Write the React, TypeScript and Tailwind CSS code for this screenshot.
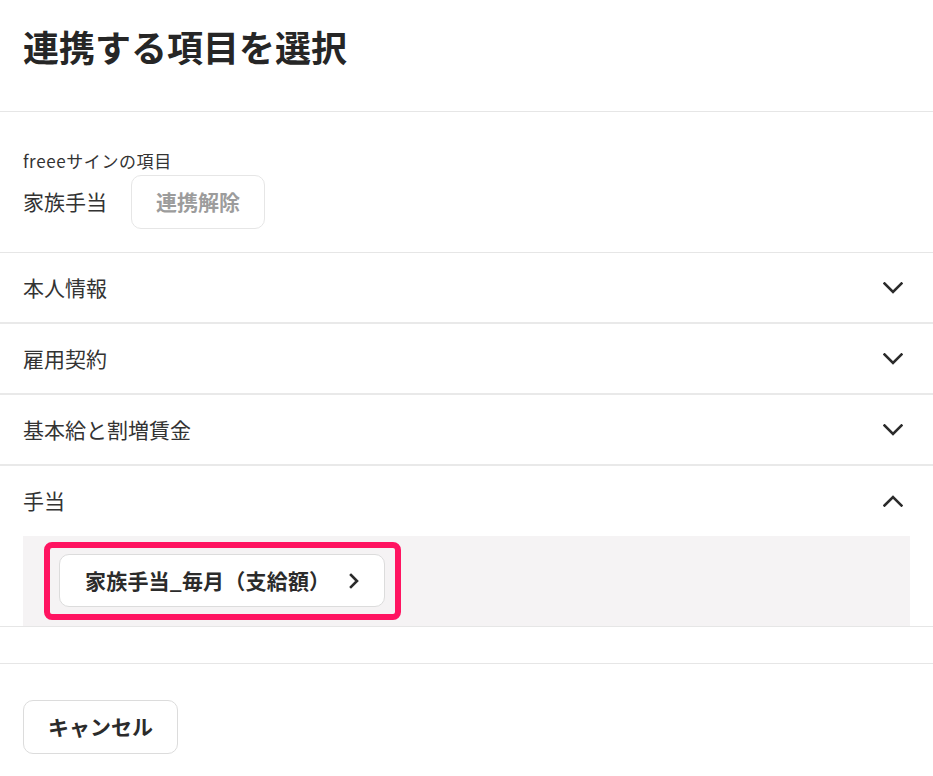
import React from "react";

const Down = () => (
  <svg width="20" height="12" viewBox="0 0 20 12" fill="none">
    <path d="M1.5 1.5 L10 10 L18.5 1.5" stroke="#2b2b2b" strokeWidth="2.6" strokeLinecap="square" />
  </svg>
);
const Up = () => (
  <svg width="20" height="12" viewBox="0 0 20 12" fill="none">
    <path d="M1.5 10.5 L10 2 L18.5 10.5" stroke="#2b2b2b" strokeWidth="2.6" strokeLinecap="square" />
  </svg>
);
const Right = () => (
  <svg width="10" height="16" viewBox="0 0 10 16" fill="none">
    <path d="M2 2 L8 8 L2 14" stroke="#2b2b2b" strokeWidth="2.6" strokeLinecap="square" />
  </svg>
);

const Row = ({ label }: { label: string }) => (
  <div className="flex h-[71px] items-center justify-between border-b-2 border-[#e9e9e9] pl-[23px] pr-[30px]">
    <span className="text-[21px] text-[#333]">{label}</span>
    <Down />
  </div>
);

export default function App() {
  return (
    <div
      className="w-[933px] h-[776px] bg-white overflow-hidden text-[#333]"
      style={{ fontFamily: '"Noto Sans CJK JP", "Noto Sans", sans-serif' }}
    >
      <div className="h-[112px] border-b border-[#e6e6e6] pl-[23px] pt-[22px]">
        <h1 className="text-[36px] font-bold leading-[48px] text-[#262626]">連携する項目を選択</h1>
      </div>
      <div className="border-b border-[#e6e6e6] pl-[23px] pt-[37px] pb-[23px]">
        <div className="text-[17px] leading-[23px] tracking-[0.6px] text-[#333]">freeeサインの項目</div>
        <div className="mt-[3px] flex items-center gap-[24px]">
          <span className="text-[21px] text-[#333]">家族手当</span>
          <button className="h-[54px] w-[134px] rounded-[10px] border border-[#e6e6e6] bg-white text-[21px] font-bold text-[#9c9c9c]">
            連携解除
          </button>
        </div>
      </div>
      <Row label="本人情報" />
      <Row label="雇用契約" />
      <Row label="基本給と割増賃金" />
      <div className="border-b border-[#e6e6e6]">
        <div className="flex h-[70px] items-center justify-between pl-[23px] pr-[30px]">
          <span className="text-[21px] text-[#333]">手当</span>
          <Up />
        </div>
        <div className="mx-[23px] bg-[#f5f3f4] pl-[21px] py-[6px]">
          <div className="inline-flex rounded-[8px] border-[6px] border-[#ff1461] pl-[9px] pr-[10px] pt-[6px] pb-[7px]">
            <button className="flex h-[53px] w-[326px] items-center justify-between rounded-[10px] border border-[#dcdcdc] bg-white pl-[25px] pr-[25px]">
              <span className="text-[21px] font-bold tracking-[0.2px] text-[#2b2b2b]">家族手当_毎月（支給額）</span>
              <Right />
            </button>
          </div>
        </div>
      </div>
      <div className="h-[37px] border-b border-[#e6e6e6]" />
      <div className="pl-[23px] pt-[36px]">
        <button className="h-[54px] w-[155px] rounded-[10px] border border-[#dcdcdc] bg-white text-[21px] font-bold text-[#2b2b2b]">
          キャンセル
        </button>
      </div>
    </div>
  );
}
